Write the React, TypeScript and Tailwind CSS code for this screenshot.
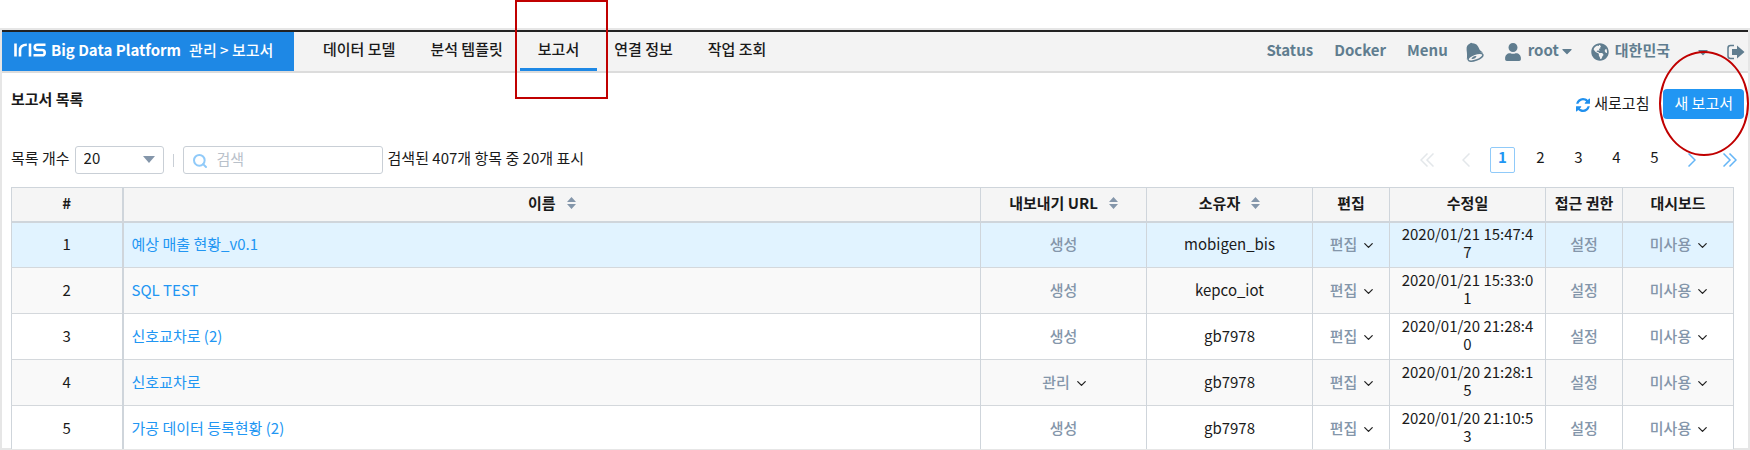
import React from "react";
import { ChevronDown, Search } from "lucide-react";
import { FaUser, FaGlobeAmericas, FaCaretDown } from "react-icons/fa";

const reports = [
  { name: "예상 매출 현황_v0.1", managed: false, owner: "mobigen_bis", modified: "2020/01/21 15:47:47" },
  { name: "SQL TEST", managed: false, owner: "kepco_iot", modified: "2020/01/21 15:33:01" },
  { name: "신호교차로 (2)", managed: false, owner: "gb7978", modified: "2020/01/20 21:28:40" },
  { name: "신호교차로", managed: true, owner: "gb7978", modified: "2020/01/20 21:28:15" },
  { name: "가공 데이터 등록현황 (2)", managed: false, owner: "gb7978", modified: "2020/01/20 21:10:53" },
];

const tabs = ["데이터 모델", "분석 템플릿", "보고서", "연결 정보", "작업 조회"];

const columns = [
  { label: "#", width: "w-[111px] border-r-2" },
  { label: "이름", sortable: true, width: "border-r" },
  { label: "내보내기 URL", sortable: true, width: "w-[166px] border-r" },
  { label: "소유자", sortable: true, width: "w-[166px] border-r" },
  { label: "편집", width: "w-[77px] border-r" },
  { label: "수정일", width: "w-[156px] border-r" },
  { label: "접근 권한", width: "w-[77px] border-r" },
  { label: "대시보드", width: "w-[111px] border-r" },
];

function IrisLogo() {
  return (
    <svg width="32" height="14" viewBox="0 0 32 14" fill="none" stroke="white" strokeWidth="2.6" aria-hidden="true">
      <path d="M1.5 0.500v13M6 13.500V7.500Q6 1.700 12.800 1.700M16 0.500v13" />
      <path d="M31.500 1.700H23.500Q20.700 1.700 20.700 4.300T23.500 7H28Q30.700 7 30.700 9.700T28 12.300H19.500" />
    </svg>
  );
}

function BellIcon() {
  return (
    <svg width="18" height="20" viewBox="0 0 18 20" aria-hidden="true">
      <path fill="#607d8f" d="M4 1.600Q5 0 6.200 1.200C11 1 12.500 5 13.500 7.500Q14.500 9 17 10.500C12 10.500 4 13.500.8 17.500C1.300 14 1 11 .6 8C.3 4.500 1.500 2.500 4 1.600Z" />
      <ellipse cx="9.500" cy="15.200" rx="7.800" ry="3" transform="rotate(-20 9.500 15.200)" fill="#f3f3f3" stroke="#607d8f" strokeWidth="1.400" />
      <path d="M5.500 17c0-2 3-3.500 5-3-.5 2-2.500 3.300-5 3Z" fill="#607d8f" />
    </svg>
  );
}

function SignOutIcon() {
  return (
    <svg width="18" height="16" viewBox="0 0 18 16" aria-hidden="true">
      <path d="M7 1.500H3.500Q1 1.500 1 4v8q0 2.500 2.500 2.500H7" fill="none" stroke="#607d8f" strokeWidth="1.500" />
      <path d="M5 5h5V1.500L17.500 8 10 14.500V11H5Z" fill="#607d8f" />
    </svg>
  );
}

function RefreshIcon() {
  return (
    <svg className="mt-1" width="14" height="14" viewBox="0 0 1536 1536" fill="#2090ee" aria-hidden="true">
      <path d="M1511 928q0 5-1 7-64 268-268 434.500T764 1536q-146 0-282.500-55T238 1324l-129 129q-19 19-45 19t-45-19-19-45V960q0-26 19-45t45-19h448q26 0 45 19t19 45-19 45l-137 137q71 66 161 102t187 36q134 0 250-65t186-179q11-17 53-117 8-23 30-23h192q13 0 22.500 9.500t9.500 22.500zm25-800v448q0 26-19 45t-45 19h-448q-26 0-45-19t-19-45 19-45l138-138Q969 256 768 256q-134 0-250 65T332 500q-11 17-53 117-8 23-30 23H50q-13 0-22.500-9.500T18 608v-7q65-268 270-434.500T768 0q146 0 284 55.500T1297 212l130-129q19-19 45-19t45 19 19 45z" />
    </svg>
  );
}

function SortIcon() {
  return (
    <svg width="9" height="12" viewBox="0 0 9 12" fill="#8496aa" aria-hidden="true">
      <path d="M0 5 4.500 0 9 5ZM0 7h9l-4.500 5Z" />
    </svg>
  );
}

function PageArrow({ d, width }: { d: string; width: number }) {
  return (
    <svg width={width} height="14" viewBox={`0 0 ${width} 14`} fill="none" stroke="currentColor" strokeWidth="1.500" aria-hidden="true">
      <path d={d} />
    </svg>
  );
}

function MenuAction({ children }: { children: React.ReactNode }) {
  return (
    <button className="-mr-1 inline-flex items-center gap-1 font-medium text-[#8496aa]">
      {children}
      <ChevronDown size={15} className="mt-1 text-[#222]" strokeWidth={2} />
    </button>
  );
}

export default function App() {
  return (
    <div className="h-screen overflow-hidden bg-white pt-7 font-['Noto_Sans_CJK_KR','Noto_Sans',sans-serif] text-[15px] leading-[18px] text-[#1a1a1a]">
      <div className="flex h-full flex-col border-2 border-[#e6e6e6]">
        <header className="flex h-[43px] shrink-0 border-t-2 border-b-2 border-t-[#222] border-b-[#dcdcdc] bg-[#f3f3f3]">
          <div className="flex w-[292px] shrink-0 items-center bg-[#1e88e5] pb-1 pl-3 text-white">
            <a href="#home" className="flex items-center gap-[5px] font-bold">
              <IrisLogo />
              <span className="whitespace-nowrap">Big Data Platform</span>
            </a>
            <span className="ml-2 whitespace-nowrap font-medium">관리 &gt; 보고서</span>
          </div>
          <nav className="flex -space-x-px pl-[11px] font-medium">
            {tabs.map((tab) => (
              <div key={tab} className="relative flex">
                <a
                  href={"#" + tab}
                  className={
                    "flex items-center whitespace-nowrap border-b-[3px] px-[18px] pb-0.5 " +
                    (tab === "보고서" ? "border-[#1e88e5]" : "border-transparent")
                  }
                >
                  {tab}
                </a>
                {tab === "보고서" && (
                  <div className="pointer-events-none absolute -top-8 -left-[5px] z-10 h-[99px] w-[93px] border-2 border-[#c00000]" />
                )}
              </div>
            ))}
          </nav>
          <div className="ml-auto flex items-center pr-[3px] pb-1 font-bold text-[#607d8f]">
            <a href="#status">Status</a>
            <a href="#docker" className="ml-[21px]">Docker</a>
            <a href="#menu" className="ml-[21px]">Menu</a>
            <button aria-label="알림" className="mt-1 ml-[18px]"><BellIcon /></button>
            <button className="ml-5 flex items-center font-bold">
              <FaUser size={18} className="mt-1 mr-1.5" />root<FaCaretDown size={16} className="mt-0.5" />
            </button>
            <button className="ml-4 flex items-center font-bold">
              <FaGlobeAmericas size={18} className="mt-1 mr-1.5" />대한민국<FaCaretDown size={16} className="mt-1 ml-[25px]" />
            </button>
            <button aria-label="로그아웃" className="mt-1 ml-4"><SignOutIcon /></button>
          </div>
        </header>

        <main className="min-h-0 flex-1 px-[9px]">
          <div className="flex h-[46px] items-center pt-4">
            <h1 className="mb-2.5 font-bold">보고서 목록</h1>
            <button className="ml-auto flex items-center gap-1 pb-0.5"><RefreshIcon />새로고침</button>
            <div className="relative ml-[14px] -mr-[5px]">
              <button className="h-[30px] rounded-sm bg-[#2196f3] px-[11px] pb-0.5 text-white">새 보고서</button>
              <div className="pointer-events-none absolute -top-[38px] -left-1 z-10 h-[105px] w-[90px] rounded-[50%] border-2 border-[#c00000]" />
            </div>
          </div>

          <div className="mt-[27px] flex h-7 items-center">
            <label htmlFor="page-size" className="mb-1">목록 개수</label>
            <div className="relative ml-[5px]">
              <select id="page-size" className="block h-7 w-[89px] appearance-none rounded-[3px] border border-[#c9cfd6] bg-white pb-1 pl-2">
                <option>20</option>
              </select>
              <svg className="pointer-events-none absolute top-[10px] right-[9px]" width="12" height="7" viewBox="0 0 12 7" fill="#8496aa" aria-hidden="true"><path d="M0 0h12L6 7Z" /></svg>
            </div>
            <span className="mx-[9px] h-[13px] w-px bg-[#c9cfd6]" />
            <div className="relative">
              <Search size={16} strokeWidth={3} className="pointer-events-none absolute top-[7px] left-[9px] text-[#90caf9]" />
              <input aria-label="검색" placeholder="검색" className="block h-7 w-[200px] rounded-[3px] border border-[#c9cfd6] pb-1 pl-[33px] placeholder:text-[#b9c1ca]" />
            </div>
            <p className="mb-1 ml-[5px]">검색된 407개 항목 중 20개 표시</p>
            <nav aria-label="페이지" className="mr-0.5 ml-auto flex items-center">
              <button aria-label="처음" className="mr-7 text-[#e3e7ea]"><PageArrow width={14} d="M7.500 .5 1 7l6.500 6.500M13.500 .5 7 7l6.500 6.500" /></button>
              <button aria-label="이전" className="mr-5 text-[#e3e7ea]"><PageArrow width={8} d="M7.500 .5 1 7l6.500 6.500" /></button>
              <div className="flex gap-[13px]">
                <button className="h-[26px] w-[25px] rounded-[2px] border border-[#90caf9] pb-1.5 font-bold text-[#2196f3]">1</button>
                {["2", "3", "4", "5"].map((p) => (
                  <button key={p} className="h-[26px] w-[25px] pb-1.5">{p}</button>
                ))}
              </div>
              <button aria-label="다음" className="ml-[21px] text-[#64b5f6]"><PageArrow width={8} d="M.5 .5 7 7 .5 13.500" /></button>
              <button aria-label="마지막" className="ml-[27px] text-[#64b5f6]"><PageArrow width={14} d="M.5 .5 7 7 .5 13.500M6.500 .5 13 7l-6.500 6.500" /></button>
            </nav>
          </div>

          <div className="h-[275px] overflow-hidden pt-[13px] pr-[5px]">
            <table className="w-full table-fixed border-collapse border border-[#cfd5db] text-center">
              <thead>
                <tr className="h-[34px] border-b-2 border-[#cfd5db] bg-[#f5f5f5]">
                  {columns.map((c) => (
                    <th key={c.label} className={"border-[#cfd5db] pb-0.5 font-bold " + c.width}>
                      {c.sortable ? (
                        <button className="inline-flex items-center gap-[11px]">{c.label}<SortIcon /></button>
                      ) : c.label}
                    </th>
                  ))}
                </tr>
              </thead>
              <tbody>
                {reports.map((r, i) => (
                  <tr key={r.name} className={"h-[46px] border-b border-[#d4d8dc] " + (i === 0 ? "bg-[#e1f3ff]" : i % 2 ? "bg-[#f9f9f9]" : "bg-white")}>
                    <td className="border-r-2 border-[#cfd5db] pb-0.5">{i + 1}</td>
                    <td className="border-r border-[#cfd5db] pb-0.5 pl-2 text-left"><a href={"#report-" + (i + 1)} className="text-[#2196f3]">{r.name}</a></td>
                    <td className="border-r border-[#cfd5db] pb-0.5">
                      {r.managed ? <MenuAction>관리</MenuAction> : <button className="font-medium text-[#8496aa]">생성</button>}
                    </td>
                    <td className="border-r border-[#cfd5db] pb-0.5">{r.owner}</td>
                    <td className="border-r border-[#cfd5db] pb-0.5"><MenuAction>편집</MenuAction></td>
                    <td className="border-r border-[#cfd5db] px-[9px] pb-1 break-all">{r.modified}</td>
                    <td className="border-r border-[#cfd5db] pb-0.5"><button className="font-medium text-[#8496aa]">설정</button></td>
                    <td className="border-r border-[#cfd5db] pb-0.5"><MenuAction>미사용</MenuAction></td>
                  </tr>
                ))}
              </tbody>
            </table>
          </div>
        </main>
      </div>
    </div>
  );
}
